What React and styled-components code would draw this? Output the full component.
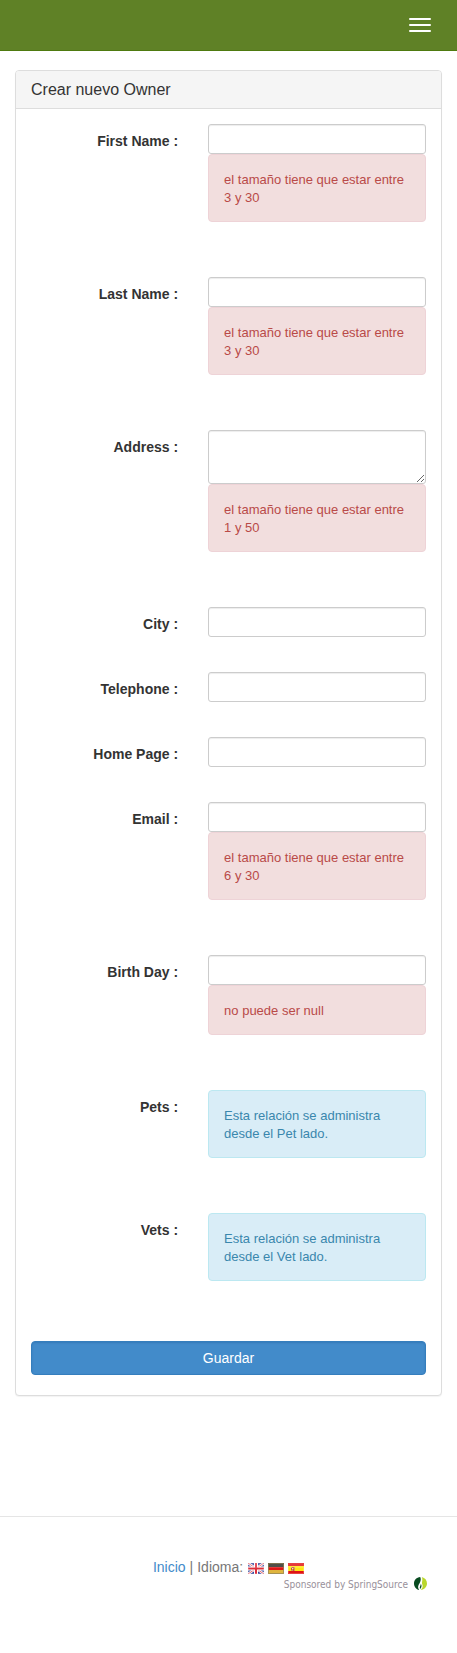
import React from "react";
import styled, { createGlobalStyle, css } from "styled-components";

const GlobalStyle = createGlobalStyle`
  *, *::before, *::after { box-sizing: border-box; }
  body {
    margin: 0;
    background: #fff;
    color: #333;
    font: 14px/20px "Liberation Sans", Arial, sans-serif;
  }
`;

const Navbar = styled.nav`
  display: flex;
  justify-content: flex-end;
  align-items: flex-start;
  height: 51px;
  padding: 8px 15px;
  background: #5f8126;
  border-bottom: 1px solid #4e7a0f;
`;

const MenuToggle = styled.button`
  display: flex;
  flex-direction: column;
  gap: 4px;
  padding: 9px 10px;
  background: transparent;
  border: 1px solid transparent;
  border-radius: 4px;
  cursor: pointer;
`;

const Bar = styled.span`
  width: 22px;
  height: 2px;
  border-radius: 1px;
  background: #fff;
`;

const Main = styled.main`
  padding: 19px 15px 0;
`;

const Panel = styled.section`
  background: #fff;
  border: 1px solid #ddd;
  border-radius: 4px;
  box-shadow: 0 1px 1px rgba(0, 0, 0, 0.05);
`;

const PanelTitle = styled.h3`
  margin: 0;
  padding: 10px 15px;
  background: #f5f5f5;
  border-bottom: 1px solid #ddd;
  border-radius: 3px 3px 0 0;
  font-size: 16px;
  line-height: 17px;
  font-weight: 400;
`;

const Form = styled.form`
  display: flex;
  flex-direction: column;
  gap: 35px;
  padding: 15px 15px 20px;
`;

const Group = styled.div`
  display: grid;
  grid-template-columns: 5fr 7fr;
  margin: 0 -15px;
`;

const labelText = css`
  padding: 7px 15px 0;
  font-weight: 700;
  text-align: right;
`;

const Label = styled.label`
  ${labelText}
`;

const Caption = styled.span`
  ${labelText}
`;

const Control = styled.div`
  min-width: 0;
  padding: 0 15px;
`;

const field = css`
  display: block;
  width: 100%;
  padding: 5px 10px;
  color: #555;
  background: #fff;
  border: 1px solid #ccc;
  border-radius: 3px;
  box-shadow: inset 0 1px 1px rgba(0, 0, 0, 0.075);
  font: 12px/18px "Liberation Sans", Arial, sans-serif;
`;

const Input = styled.input`
  ${field}
  height: 30px;
`;

const TextArea = styled.textarea`
  ${field}
  height: 54px;
`;

const Alert = styled.div`
  margin-bottom: 20px;
  padding: 16px 15px 14px;
  border: 1px solid ${(p) => (p.$info ? "#bce8f1" : "#eed3d7")};
  border-radius: 4px;
  background: ${(p) => (p.$info ? "#d9edf7" : "#f2dede")};
  color: ${(p) => (p.$info ? "#3a87ad" : "#b94a48")};
  font-size: 13px;
  line-height: 18px;
`;

const SaveButton = styled.button`
  width: 100%;
  height: 34px;
  margin-top: 5px;
  color: #fff;
  background: #428bca;
  border: 1px solid #357ebd;
  border-radius: 4px;
  box-shadow: inset 0 1px 2px rgba(0, 60, 120, 0.2);
  font: 14px/20px "Liberation Sans", Arial, sans-serif;
  cursor: pointer;
`;

const Footer = styled.footer`
  margin-top: 120px;
  padding: 40px 30px 60px;
  border-top: 1px solid #e5e5e5;
  color: #777;
`;

const FooterNav = styled.div`
  display: flex;
  justify-content: center;
  gap: 4px;
`;

const Flags = styled.span`
  display: flex;
  gap: 4px;
  padding: 6px 0 0 1px;
`;

const Link = styled.a`
  color: #428bca;
  text-decoration: none;
`;

const FlagLink = styled.a`
  display: flex;
`;

const Sponsor = styled.a`
  display: flex;
  justify-content: flex-end;
  align-items: flex-start;
  gap: 6px;
  color: #98909a;
  font: 10px/16px "DejaVu Sans Condensed", "Noto Sans", sans-serif;
  text-decoration: none;
`;

const FlagFrame = ({ label, children }) => (
  <svg width="16" height="11" viewBox="0 0 16 11" role="img" aria-label={label}>
    {children}
    <path d="M1 1h14v4H1z" fill="#fff" opacity=".16" />
    <path d="M.5.5h15v10H.5z" fill="none" stroke="#fff" strokeOpacity=".2" />
  </svg>
);

const EnglishFlag = () => (
  <FlagFrame label="English">
    <path fill="#35459a" d="M0 0h16v11H0z" />
    <path d="M0 0l16 11M16 0L0 11" stroke="#fff" strokeWidth="2.4" />
    <path d="M0 0l16 11M16 0L0 11" stroke="#e0525c" strokeWidth=".9" />
    <path d="M8 0v11M0 5.5h16" stroke="#fff" strokeWidth="4" />
    <path d="M8 0v11M0 5.5h16" stroke="#dd2e3b" strokeWidth="2" />
  </FlagFrame>
);

const GermanFlag = () => (
  <FlagFrame label="Deutsch">
    <path fill="#2f2d24" d="M0 0h16v4H0z" />
    <path fill="#df1616" d="M0 4h16v3H0z" />
    <path fill="#dfb53e" d="M0 7h16v4H0z" />
    <path d="M.5.5h15v10H.5z" fill="none" stroke="#6d5c22" strokeOpacity=".7" />
  </FlagFrame>
);

const SpanishFlag = () => (
  <FlagFrame label="Español">
    <path fill="#e01414" d="M0 0h16v11H0z" />
    <path fill="#ffe712" d="M0 3h16v5H0z" />
    <path fill="#d29a50" d="M3 4h4v4H3z" />
    <path fill="#c4523d" d="M4 4h2v1H4zM3 5h1v2H3zM5 6h1v2H5z" />
    <path fill="#eee3c8" d="M4 5h1v1H4z" />
  </FlagFrame>
);

const SpringLogo = () => (
  <svg width="13" height="13" viewBox="0 0 13 13" aria-hidden="true">
    <path fill="#084b20" d="M6.2 0C2.600 .3 0 3.100 0 6.500S2.200 12.300 5.200 13C4 11.400 3.800 9.700 4.500 8.200C5.300 6.500 7.900 3.300 6.200 0z" />
    <path fill="#b9d72c" d="M7.800 0C11 .8 13 3.300 13 6.500S10.400 12.700 6.800 13C8.700 11 9.100 9.100 8.300 7.400C7.400 5.500 9.200 3 7.800 0z" />
    <path fill="#084b20" d="M6.900 6.700C8.100 8.800 7.400 10.600 6.100 12C5.200 10.200 6.500 8.700 6.900 6.700z" />
  </svg>
);

const sizeError = (min, max) => `el tamaño tiene que estar entre ${min} y ${max}`;
const relationNote = (entity) => `Esta relación se administra desde el ${entity} lado.`;

const fields = [
  { id: "firstName", label: "First Name", error: sizeError(3, 30) },
  { id: "lastName", label: "Last Name", error: sizeError(3, 30) },
  { id: "address", label: "Address", error: sizeError(1, 50), multiline: true },
  { id: "city", label: "City" },
  { id: "telephone", label: "Telephone" },
  { id: "homePage", label: "Home Page" },
  { id: "email", label: "Email", error: sizeError(6, 30) },
  { id: "birthDay", label: "Birth Day", error: "no puede ser null" },
];

const relations = [
  { label: "Pets", note: relationNote("Pet") },
  { label: "Vets", note: relationNote("Vet") },
];

const Field = ({ id, label, error, multiline }) => {
  const props = {
    id,
    name: id,
    "aria-invalid": Boolean(error),
    "aria-describedby": error ? `${id}-error` : undefined,
  };
  return (
    <Group>
      <Label htmlFor={id}>{`${label} :`}</Label>
      <Control>
        {multiline ? <TextArea {...props} /> : <Input type="text" {...props} />}
        {error && <Alert id={`${id}-error`}>{error}</Alert>}
      </Control>
    </Group>
  );
};

export default function App() {
  return (
    <>
      <GlobalStyle />
      <Navbar>
        <MenuToggle type="button" aria-label="Menú">
          <Bar />
          <Bar />
          <Bar />
        </MenuToggle>
      </Navbar>
      <Main>
        <Panel>
          <PanelTitle>Crear nuevo Owner</PanelTitle>
          <Form onSubmit={(e) => e.preventDefault()}>
            {fields.map((f) => (
              <Field key={f.id} {...f} />
            ))}
            {relations.map(({ label, note }) => (
              <Group key={label}>
                <Caption>{`${label} :`}</Caption>
                <Control>
                  <Alert $info>{note}</Alert>
                </Control>
              </Group>
            ))}
            <SaveButton type="submit">Guardar</SaveButton>
          </Form>
        </Panel>
      </Main>
      <Footer>
        <FooterNav>
          <Link href="#inicio">Inicio</Link>
          <span>|</span>
          <span>Idioma:</span>
          <Flags>
            <FlagLink href="#en"><EnglishFlag /></FlagLink>
            <FlagLink href="#de"><GermanFlag /></FlagLink>
            <FlagLink href="#es"><SpanishFlag /></FlagLink>
          </Flags>
        </FooterNav>
        <Sponsor href="#springsource">
          <span>Sponsored by SpringSource</span>
          <SpringLogo />
        </Sponsor>
      </Footer>
    </>
  );
}
